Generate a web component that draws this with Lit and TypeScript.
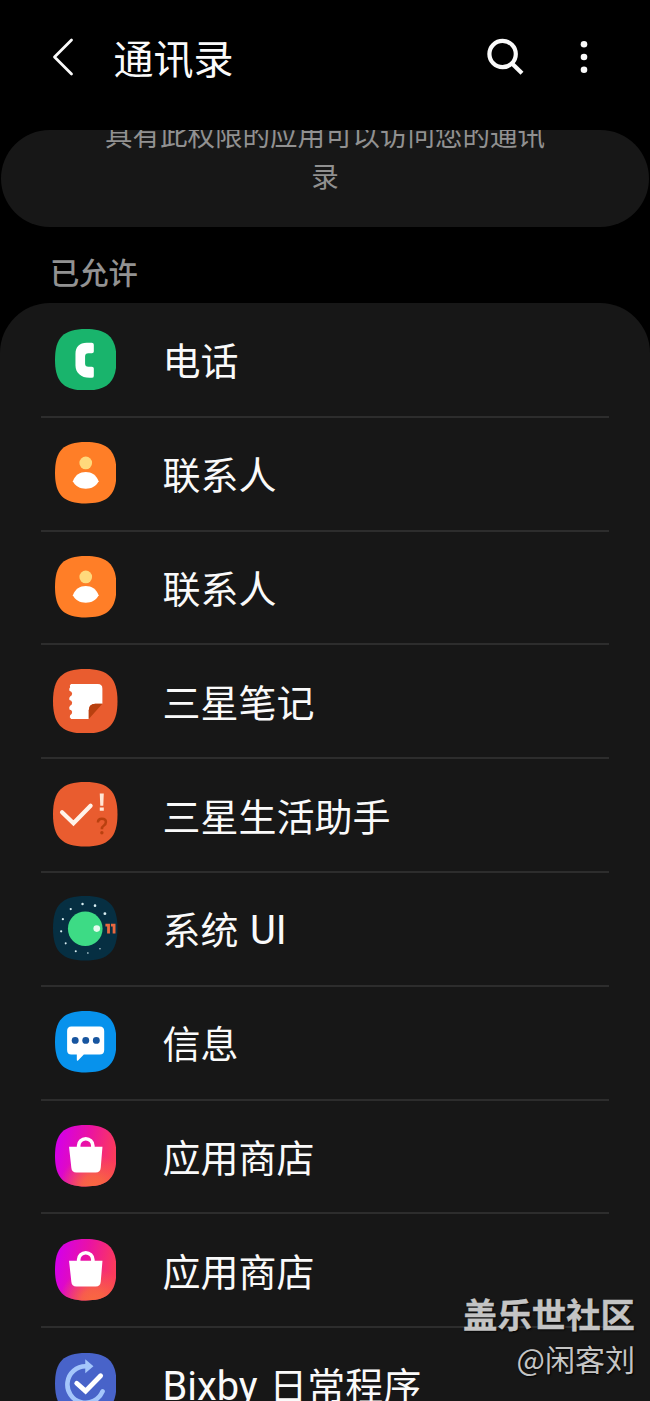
import { LitElement, html, css, svg } from "lit";
import { customElement } from "lit/decorators.js";

const SHAPE = "M32 0C55 0 64 9 64 32S55 64 32 64 0 55 0 32 9 0 32 0Z";

const contacts = svg`
  <path fill="#ff7e27" d=${SHAPE} />
  <circle cx="32" cy="21.8" r="6.6" fill="#ffd97c" />
  <path fill="#fff" d="M18.6 40.8C21 34.500 26 31.300 32 31.300S43 34.500 45.400 40.800C43 45.800 38 48.600 32 48.600S21 45.800 18.600 40.800Z" />`;

const store = svg`
  <defs>
    <linearGradient id="g" x1="0.02" y1="0.35" x2="0.95" y2="0.55">
      <stop offset="0" stop-color="#d400e8" />
      <stop offset="0.5" stop-color="#ea12a4" />
      <stop offset="1" stop-color="#fb3a5c" />
    </linearGradient>
    <radialGradient id="o" cx="0.62" cy="1.02" r="0.55">
      <stop offset="0" stop-color="#f9693f" />
      <stop offset="0.35" stop-color="#f9693f" stop-opacity=".85" />
      <stop offset="1" stop-color="#f9693f" stop-opacity="0" />
    </radialGradient>
  </defs>
  <path fill="url(#g)" d=${SHAPE} />
  <path fill="url(#o)" d=${SHAPE} />
  <path fill="none" stroke="#fff" stroke-width="3.800" d="M24.600 24V21.500A7.400 7.200 0 0 1 39.400 21.500V24" />
  <path fill="#fff" d="M14.600 22.600H49.400L47.600 44.500Q47.200 49.500 42.400 49.500H22.200Q17.400 49.500 17 44.500Z" />`;

const icons = {
  phone: svg`
    <path fill="#19b46c" d=${SHAPE} />
    <path fill="#fff" d="M33 14.300H38.200Q40.400 14.300 40.400 16.300V23.400Q40.400 25.300 38.400 25.300H34.800Q31.300 25.300 31.300 28.600V36Q31.300 39.300 34.800 39.300H38.400Q40.400 39.300 40.400 41.200V48.800Q40.400 50.800 38.200 50.800H36C27 50.800 21.300 45.500 21.300 38V26C21.300 18.500 25.500 14.300 33 14.300Z" />`,
  contacts,
  notes: svg`
    <path fill="#e95c2f" d=${SHAPE} />
    <path fill="#fff" d="M18 15H44.500Q49 15 49 19.500V34.500H42Q35.500 34.500 35.500 41V49.500H18Q15.800 48 17 46Q19.200 44.500 19 42.500Q18.600 40.600 16.300 40.200Q15.600 37.800 17 36.500Q19.200 35.500 19 33.200Q18.600 31.200 16.300 30.800Q15.600 28.500 17 27.300Q19.200 26.300 19 24Q18.600 22.200 16.300 21.600Q15.600 19.400 17 18.200Q16 16 18 15Z" />
    <path fill="#b8400f" d="M49 34.500H42Q35.500 34.500 35.500 41V49.500Z" />`,
  life: svg`
    <path fill="#e95c2f" d=${SHAPE} />
    <path fill="none" stroke="#fff3ea" stroke-width="4.200" stroke-linecap="round" stroke-linejoin="miter" d="M9 30L20.300 41L37.300 23.500" />
    <path fill="#ffe6d6" d="M46.400 11.500H50.400L49.900 23.500H46.900ZM46.400 25.400H50.400V28.600H46.400Z" />
    <path fill="none" stroke="#b9400f" stroke-width="2.500" d="M44.600 40.300Q44.600 36.500 48.500 36.500Q52.500 36.500 52.500 39.800Q52.500 42 50.500 43.200Q48.500 44.400 48.500 47" />
    <circle cx="48.500" cy="50.300" r="1.700" fill="#b9400f" />`,
  system: svg`
    <path fill="#062f42" d=${SHAPE} />
    <circle cx="32" cy="32.500" r="17.200" fill="#3ddb85" />
    <circle cx="43.400" cy="32.300" r="3.300" fill="#e6fbef" />
    <path fill="#e9683f" d="M52 27.600H56.500V37.200H53.700V30.200H52ZM57.500 27.600H62V37.200H59.200V30.200H57.500Z" />
    <g fill="#d8eef2">
      <circle cx="29.300" cy="8" r="1.200" /><circle cx="41.700" cy="9.600" r="1.300" />
      <circle cx="51.500" cy="17.500" r="1.400" /><circle cx="17.600" cy="13" r="1.100" />
      <circle cx="9.800" cy="23" r="1.100" /><circle cx="8.100" cy="35" r="1.100" />
      <circle cx="12.600" cy="47" r="1" /><circle cx="22.600" cy="54.800" r="1" />
      <circle cx="34.600" cy="56.500" r=".8" /><circle cx="46.600" cy="52.400" r=".7" />
    </g>`,
  messages: svg`
    <path fill="#0792ec" d=${SHAPE} />
    <path fill="#fff" d="M17 16H46.500Q51.200 16 51.200 20.700V40.500Q51.200 45.200 46.500 45.200H30L24 51.400Q22.700 52.400 22.700 50.700V45.200H17Q12.600 45.200 12.600 40.500V20.700Q12.600 16 17 16Z" />
    <g fill="#17559f"><circle cx="21" cy="30.600" r="3.600" /><circle cx="32" cy="30.600" r="3.600" /><circle cx="43" cy="30.600" r="3.600" /></g>`,
  store,
  bixby: svg`
    <path fill="#4863c9" d=${SHAPE} />
    <path fill="none" stroke="#a4c6fb" stroke-width="4.800" d="M32 13.800A19 19 0 1 0 49.500 40" stroke-linecap="round" />
    <path fill="#a4c6fb" d="M31.500 6.600L40 13.800L31.500 21Z" />
    <path fill="none" stroke="#fff" stroke-width="5" stroke-linecap="round" d="M22.600 31.500L31.800 39.700L47.500 23.700" />`,
};

type IconName = keyof typeof icons;

const APPS: { name: string; icon: IconName; large?: boolean }[] = [
  { name: "电话", icon: "phone" },
  { name: "联系人", icon: "contacts" },
  { name: "联系人", icon: "contacts" },
  { name: "三星笔记", icon: "notes", large: true },
  { name: "三星生活助手", icon: "life", large: true },
  { name: "系统 UI", icon: "system", large: true },
  { name: "信息", icon: "messages" },
  { name: "应用商店", icon: "store" },
  { name: "应用商店", icon: "store" },
  { name: "Bixby 日常程序", icon: "bixby" },
];

@customElement("app-row")
class AppRow extends LitElement {
  static properties = { name: {}, icon: {}, large: { type: Boolean } };
  declare name: string;
  declare icon: IconName;
  declare large: boolean;

  static styles = css`
    :host {
      display: grid;
      grid-template-columns: 88.500px 1fr;
      align-items: center;
      height: 111.800px;
      margin: 0 41px;
      border-bottom: 2px solid #2d2d2d;
      color: #fafafa;
      font: 400 38px/56px Roboto, "Noto Sans CJK SC", sans-serif;
    }
    .icon {
      display: block;
      justify-self: center;
      width: 61.500px;
      height: 61.500px;
      margin-bottom: 1px;
    }
    .large {
      width: 64.500px;
      height: 64.500px;
    }
    .label {
      padding: 5px 0 0 33px;
      white-space: pre;
    }
    .latin {
      font-size: 39.800px;
      line-height: 1;
    }
    .gap {
      letter-spacing: 2px;
    }
  `;

  private label() {
    return this.name
      .split(/([A-Za-z]+| )/)
      .filter(Boolean)
      .map((part) =>
        part === " "
          ? html`<span class="gap"> </span>`
          : /[A-Za-z]/.test(part)
            ? html`<span class="latin">${part}</span>`
            : part
      );
  }

  render() {
    return html`
      <svg class="icon ${this.large ? "large" : ""}" viewBox="0 0 64 64">${icons[this.icon]}</svg>
      <span class="label">${this.label()}</span>
    `;
  }
}

@customElement("app-root")
class AppRoot extends LitElement {
  static styles = css`
    :host {
      position: relative;
      display: flex;
      flex-direction: column;
      height: 1401px;
      overflow: hidden;
      background: #000;
      font-family: Roboto, "Noto Sans CJK SC", sans-serif;
    }
    header {
      flex: none;
      display: flex;
      align-items: center;
      box-sizing: border-box;
      height: 130px;
      padding: 0 57px 14px 50px;
      color: #fafafa;
    }
    h1 {
      flex: 1;
      margin: 0;
      padding: 5px 0 0 36.500px;
      font-size: 40px;
      line-height: 60px;
      font-weight: 400;
    }
    .back {
      width: 27px;
      height: 44px;
    }
    .search {
      width: 40px;
      height: 40px;
      margin-right: 50px;
    }
    .more {
      width: 18px;
      height: 40px;
    }
    .notice {
      flex: none;
      display: flex;
      flex-direction: column;
      justify-content: flex-end;
      box-sizing: border-box;
      height: 97px;
      margin: 0 1px;
      padding: 0 100px 29px;
      overflow: hidden;
      border-radius: 50px;
      background: #171717;
      color: #919191;
      font-size: 27.500px;
      line-height: 40.500px;
      text-align: center;
    }
    .notice p {
      margin: 0;
    }
    h2 {
      flex: none;
      box-sizing: border-box;
      height: 77px;
      margin: 0;
      padding: 26px 50px 0 50px;
      color: #929292;
      font-size: 29.300px;
      line-height: 42px;
      font-weight: 500;
    }
    .list {
      flex: none;
      margin-top: -1px;
      padding-top: 1px;
      border-radius: 50px 50px 0 0;
      background: #171717;
    }
    .watermark {
      position: absolute;
      right: 15px;
      bottom: 20px;
      display: flex;
      flex-direction: column;
      align-items: flex-end;
      color: #c4c4c4;
      font-family: "Noto Sans CJK SC", sans-serif;
      text-shadow: 1px 1px 2px #000;
      white-space: nowrap;
    }
    .site {
      font-size: 34.400px;
      line-height: 46px;
      font-weight: 700;
      -webkit-text-stroke: 0.4px #c4c4c4;
    }
    .author {
      font-size: 30px;
      line-height: 45px;
      font-weight: 400;
    }
  `;

  render() {
    return html`
      <header>
        <svg class="back" viewBox="0 0 27 44" fill="none" stroke="#fafafa" stroke-width="2.800" stroke-linecap="round" stroke-linejoin="round">
          <path d="M21.500 4L4.500 21L21.500 38" />
        </svg>
        <h1>通讯录</h1>
        <svg class="search" viewBox="0 0 40 40" fill="none" stroke="#fafafa" stroke-width="4.200">
          <circle cx="17.600" cy="16" r="13.200" />
          <path d="M27 25.500L37 35.300" />
        </svg>
        <svg class="more" viewBox="0 0 18 40" fill="#fafafa">
          <circle cx="9" cy="6.300" r="3.300" />
          <circle cx="9" cy="19" r="3.300" />
          <circle cx="9" cy="31.700" r="3.300" />
        </svg>
      </header>
      <section class="notice"><p>具有此权限的应用可以访问您的通讯录</p></section>
      <h2>已允许</h2>
      <section class="list">
        ${APPS.map((a) => html`<app-row .name=${a.name} .icon=${a.icon} .large=${!!a.large}></app-row>`)}
      </section>
      <div class="watermark">
        <span class="site">盖乐世社区</span>
        <span class="author">@闲客刘</span>
      </div>
    `;
  }
}
